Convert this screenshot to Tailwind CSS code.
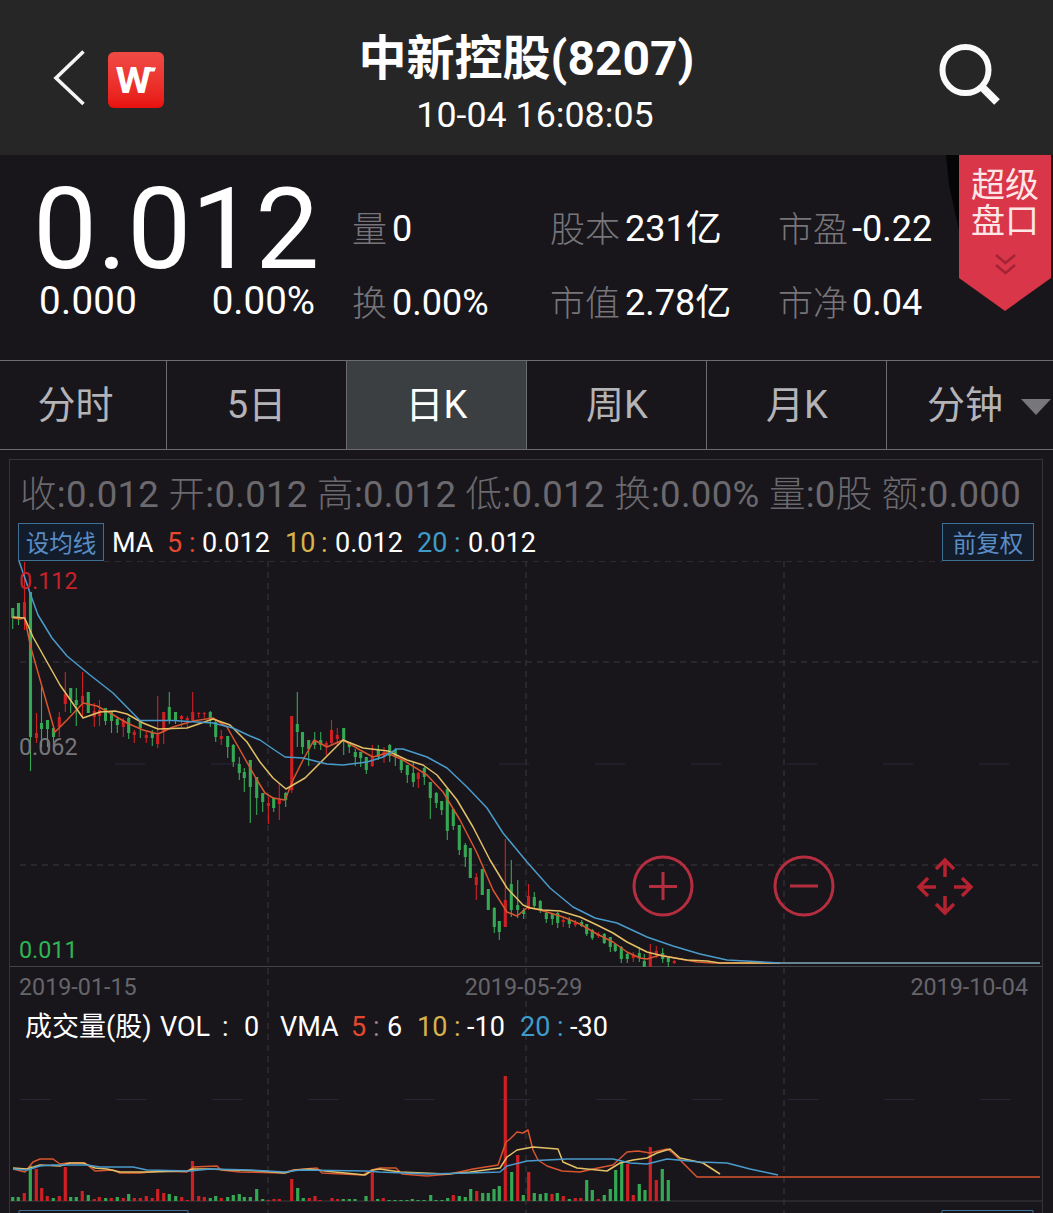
<!DOCTYPE html>
<html lang="zh-CN">
  <head>
    <meta charset="UTF-8" />
    <meta name="viewport" content="width=device-width, initial-scale=1.0" />
    <title>中新控股(8207)</title>
    <script src="https://cdn.jsdelivr.net/npm/@tailwindcss/browser@4"></script>
  </head>
  <body
    class="flex h-[1213px] w-[1053px] flex-col overflow-hidden bg-[#18161b] font-['Roboto','Noto_Sans_CJK_SC',sans-serif] text-white"
  >
    <!-- HEADER -->
    <header class="flex h-[155px] shrink-0 justify-between bg-[#262626]">
      <div class="flex w-[300px] items-start gap-[22px] pt-[49px] pl-[52px]">
        <svg class="h-[58px] w-[34px]" viewBox="0 0 34 58" fill="none" stroke="#f4f4f4" stroke-width="3.6">
          <path d="M31.500 2.500 L4 29 L31.500 55" />
        </svg>
        <div
          class="mt-[3px] flex h-14 w-14 items-center justify-center rounded-[6px] bg-linear-to-b from-[#f04a45] to-[#e8100f]"
        >
          <svg class="h-14 w-14" viewBox="0 0 56 56">
            <text x="7.500" y="41" font-size="36" font-weight="700" textLength="36" lengthAdjust="spacingAndGlyphs" fill="#fff">W</text>
            <path d="M39 15.500 H48 L46.500 19.500 H38 Z" fill="#fff" />
          </svg>
        </div>
      </div>
      <div class="pt-[30px] text-center">
        <h1 class="text-[48px] leading-[58px] font-bold">中新控股(8207)</h1>
        <p class="pl-[17px] text-[35.8px] leading-[54px]">10-04 16:08:05</p>
      </div>
      <div class="flex w-[300px] justify-end pt-[42px] pr-[51px]">
        <svg class="h-[66px] w-[66px]" viewBox="0 0 66 66" fill="none" stroke="#fafafa">
          <circle cx="29.500" cy="28" r="23" stroke-width="6" />
          <path d="M45 44 L61 60" stroke-width="8" />
        </svg>
      </div>
    </header>

    <!-- QUOTE -->
    <section class="flex h-[205px] shrink-0">
      <div class="w-[352px] pt-[22px] pl-[33px]">
        <p class="h-[104px] text-[114px] leading-[104px]">0.012</p>
        <div class="flex justify-between pr-[37px] pl-[6px] text-[38.5px] leading-[40px]">
          <span class="tracking-[0.300px]">0.000</span>
          <span>0.00%</span>
        </div>
      </div>
      <div
        class="grid w-[594px] grid-cols-[198px_228px_1fr] content-start pt-[38px] text-[36px] leading-[73px] whitespace-nowrap"
      >
        <p class="flex gap-[5px]"><span class="mt-px text-[35px] font-light text-[#77757a]">量</span>0</p>
        <p class="flex gap-[5px]"><span class="mt-px text-[35px] font-light text-[#77757a]">股本</span>231亿</p>
        <p class="flex gap-[4px]"><span class="mt-px text-[35px] font-light text-[#77757a]">市盈</span>-0.22</p>
        <p class="flex gap-[5px]"><span class="mt-px text-[35px] font-light text-[#77757a]">换</span>0.00%</p>
        <p class="flex gap-[5px]"><span class="mt-px text-[35px] font-light text-[#77757a]">市值</span>2.78亿</p>
        <p class="flex gap-[4px]"><span class="mt-px text-[35px] font-light text-[#77757a]">市净</span>0.04</p>
      </div>
      <div class="relative w-[107px]">
        <svg class="absolute inset-0 h-[160px] w-[107px]" viewBox="0 0 107 160">
          <path d="M0 0 H14 V80 L3 30 Z" fill="#050505" />
          <path d="M13 0 H105 V123 L59 156 L13 123 Z" fill="#d93649" />
          <g fill="none" stroke="#a52336" stroke-width="2.500">
            <path d="M50 100 L59.500 108 L69 100" />
            <path d="M50 110 L59.500 118 L69 110" />
          </g>
        </svg>
        <p class="relative pt-[12px] pl-[25px] text-[34px] leading-[36px] text-[#ffe6e6]">超级<br />盘口</p>
      </div>
    </section>

    <!-- PERIOD TABS -->
    <nav
      class="flex h-[90px] shrink-0 border-y border-[#6c6b70] text-center text-[38px] leading-[88px] text-[#b4b3b8]"
    >
      <div class="w-[167px] border-r border-[#6c6b70] pr-[15px]">分时</div>
      <div class="w-[180px] border-r border-[#6c6b70]">5日</div>
      <div class="w-[180px] border-r border-[#6c6b70] bg-[#3c3f42] text-white">日K</div>
      <div class="w-[180px] border-r border-[#6c6b70] pl-px">周K</div>
      <div class="w-[180px] border-r border-[#6c6b70] pl-px">月K</div>
      <div class="flex grow items-center gap-[18px] pl-[40px]">
        <span>分钟</span>
        <svg class="mt-1 h-4 w-[30px] shrink-0" viewBox="0 0 30 16"><path d="M0 0 H30 L15 16 Z" fill="#77767b" /></svg>
      </div>
    </nav>

    <!-- CHART PANEL -->
    <main class="mt-[9px] mr-[10px] ml-[9px] flex grow flex-col border border-b-0 border-[#36343a]">
      <div
        class="flex h-[63px] justify-between pr-[21px] pl-[10px] text-[36.5px] leading-[70px] tracking-[0.300px] whitespace-nowrap text-[#6b696e]"
      >
        <span><span class="font-light">收</span>:0.012</span>
        <span><span class="font-light">开</span>:0.012</span>
        <span><span class="font-light">高</span>:0.012</span>
        <span><span class="font-light">低</span>:0.012</span>
        <span><span class="font-light">换</span>:0.00%</span>
        <span><span class="font-light">量</span>:0<span class="font-light">股</span></span>
        <span><span class="font-light">额</span>:0.000</span>
      </div>
      <div class="flex h-[38px] shrink-0 pr-[8px] pl-[8px] text-[27px] leading-[40px]">
        <span class="h-[38px] w-[86px] border border-[#3f6f93] bg-[#121c2a] text-center text-[23.5px] leading-[40px] text-[#5a8cc6]">设均线</span>
        <span class="ml-[8px] w-[55px]">MA</span>
        <span class="w-[22px] text-[#e6482f]">5</span>
        <span class="w-[13px] text-[#e6482f]">:</span>
        <span class="w-[83px]">0.012</span>
        <span class="w-[36px] text-[#d9b24c]">10</span>
        <span class="w-[14px] text-[#d9b24c]">:</span>
        <span class="w-[82px]">0.012</span>
        <span class="w-[37px] text-[#3d9cc9]">20</span>
        <span class="w-[14px] text-[#3d9cc9]">:</span>
        <span>0.012</span>
        <span class="ml-auto h-[38px] w-[92px] border border-[#3f6f93] bg-[#121c2a] text-center text-[23.5px] leading-[40px] text-[#5a8cc6]">前复权</span>
      </div>

      <div class="relative grow">
        <!-- drawn in page coordinates -->
        <svg id="chart" class="absolute inset-0 h-full w-full" viewBox="10 561 1032 652" preserveAspectRatio="xMinYMin slice" fill="none">
          <g stroke="#3a393e" stroke-dasharray="6 5">
            <path d="M268 561 V1213 M526 561 V1213 M784 561 V1213" />
            <path d="M20 662 H1042 M20 865 H1042" />
            <path d="M104 561.500 H942" stroke="#2c2b30" />
          </g>
          <path d="M115 764 H1042 M20 1099.500 H1042" stroke="#27263a" stroke-dasharray="30 66" />
          <path d="M10 966.500 H1042" stroke="#434247" />
          <path d="M10 1201 H1042" stroke="#3a393e" />
          <g id="bars"></g>
          <g id="lines" stroke-width="1.500" stroke-linejoin="round"></g>
          <path d="M780 963 H1040" stroke="#7fa9bd" stroke-width="1.500" />
          <path d="M19 1213 V1210.500 H188 V1213 M942 1213 V1210.500 H1033 V1213" stroke="#3f6f93" />
          <!-- zoom and pan controls -->
          <g stroke="#b52e40" stroke-width="3">
            <circle cx="663" cy="886" r="29" />
            <path d="M649 886.500 H677 M663 872 V900" />
            <circle cx="804" cy="886" r="29" />
            <path d="M790 886 H818" />
          </g>
          <g stroke="#b52230" stroke-width="3.500">
            <path d="M945 877 V861 M936 869 L945 860 L954 869" />
            <path d="M945 896 V912 M936 904 L945 913 L954 904" />
            <path d="M936 887 H920 M928 878 L919 887 L928 896" />
            <path d="M954 887 H970 M962 878 L971 887 L962 896" />
          </g>
        </svg>
        <div class="relative flex h-full flex-col text-[23.3px] leading-[28px] text-[#77767a]">
          <p class="mt-[6px] pl-[9px] text-[#c5222b]">0.112</p>
          <p class="mt-[138px] pl-[9px]">0.062</p>
          <p class="mt-[175px] pl-[9px] text-[#2fb552]">0.011</p>
          <div class="mt-[9px] flex justify-between pr-[14px] pl-[9px] text-[#66656a]">
            <span>2019-01-15</span>
            <span>2019-05-29</span>
            <span>2019-10-04</span>
          </div>
          <div class="mt-[7px] flex pl-[15px] text-[27px] leading-[38px] whitespace-nowrap text-white">
            <span class="w-[135px] text-[27px]">成交量(股)</span>
            <span class="w-[62px]">VOL</span>
            <span class="w-[22px]">:</span>
            <span class="w-[36px]">0</span>
            <span class="w-[71px]">VMA</span>
            <span class="w-[22px] text-[#e6482f]">5</span>
            <span class="w-[14px] text-[#a08078]">:</span>
            <span class="w-[30px]">6</span>
            <span class="w-[37px] text-[#d9b24c]">10</span>
            <span class="w-[13px] text-[#d9b24c]">:</span>
            <span class="w-[53px]">-10</span>
            <span class="w-[37px] text-[#3d9cc9]">20</span>
            <span class="w-[13px] text-[#3d9cc9]">:</span>
            <span>-30</span>
          </div>
        </div>
      </div>
    </main>

    <script>
      const GREEN = "#35a853";
      const RED = "#cf1f22";

      // x, high, low, body top, body bottom, color
      const candles = `12.7 608 629 608 618 g|18.5 603 625 603 618 g|24.5 562 630 602 618 r|30.5 592 771 592 737 g|36.5 713 743 733 738 r|41.5 687 747 723 729 g|47.5 720 747 720 729 g|53.5 728 745 728 737 g|59.3 712 737 717 727 r|65.3 672 712 694 704 r|70.7 688 713 688 700 g|76.3 688 726 700 705 g|82.5 672 717 696 703 r|88.3 692 713 692 713 g|94.3 703 727 711 717 r|99.5 700 726 710 716 r|105.5 708 725 708 721 g|111.5 712 733 712 721 g|117.3 717 733 719 725 g|123.3 718 737 720 727 r|128.7 717 739 718 733 g|134.3 730 743 732 735 r|140.3 722 738 722 728 g|146.3 732 743 735 738 r|152.3 730 746 732 738 g|157.7 696 748 735 744 r|163.7 712 744 712 732 r|169.3 692 724 707 720 g|175.5 712 724 712 720 g|181.5 715 727 716 719 r|187.3 716 727 718 720 r|192.7 692 722 712 720 r|198.7 712 718 713 714 r|204.3 712 718 713 714 r|210.3 711 727 712 718 g|215.7 720 742 722 737 g|221.3 730 745 736 739 r|227.7 736 758 736 747 g|233.3 744 767 745 762 g|239.3 757 780 764 773 g|244.3 768 792 772 778 g|250.3 760 823 760 787 g|256.7 777 815 777 798 g|262.7 793 812 793 802 g|268.4 797 824 803 806 r|273.7 797 812 798 808 g|279.3 783 820 800 804 r|285.7 792 807 793 800 g|291.7 716 793 716 790 r|297.3 692 747 724 732 g|302.5 732 754 732 747 g|308.7 740 766 740 749 g|314.7 732 749 741 745 g|320.7 732 750 740 745 g|326.3 741 755 743 747 r|331.5 720 745 730 743 r|337.3 728 745 735 739 r|343.7 728 755 728 742 g|349.3 742 753 742 747 g|355.3 749 766 752 757 g|360.7 752 767 752 758 g|366.3 757 774 757 770 g|372.3 745 767 757 766 r|378.3 745 760 750 757 g|384 747 763 752 757 r|389.7 744 762 745 756 g|395.3 748 766 750 757 g|401.3 760 773 760 770 g|407.3 765 783 765 775 g|413.3 762 787 773 782 g|418.3 772 788 773 779 r|424.3 767 785 768 777 g|430.3 782 819 782 798 g|436.3 792 808 793 803 g|441.7 801 815 801 810 g|447.3 789 840 789 831 g|453.3 809 830 809 826 g|459.3 825 855 825 850 g|465.3 843 867 845 857 g|470.3 848 878 848 878 g|476.3 873 900 877 885 r|482.3 869 895 869 895 g|488.3 889 910 889 910 g|494.3 907 933 908 927 g|499.3 921 940 921 932 g|505.3 839 927 900 927 r|511.3 860 917 884 910 g|517.7 880 918 905 910 g|523.7 908 919 910 914 g|528.5 884 910 896 907 r|534.3 892 908 897 906 g|540.3 900 913 901 910 g|546.3 912 923 913 919 g|552.3 913 925 914 919 g|557.7 912 928 913 923 g|563.3 918 927 920 922 r|569.3 917 928 920 924 g|575.3 920 927 923 925 r|581.7 920 927 922 926 g|586.7 924 936 924 934 g|592.3 929 940 930 938 g|598.3 932 938 934 936 r|604.3 933 944 934 943 g|610.3 937 952 937 947 g|615.3 943 952 944 951 g|621.3 946 963 947 959 g|627.3 953 963 954 959 g|633.3 952 962 955 958 r|639.3 947 962 953 958 g|644.3 954 967 961 967 g|650.3 944 967 953 967 r|656.3 946 958 951 954 r|662.7 948 963 953 959 g|668.3 957 967 958 962 g|674.3 960 964 961 963 r`;

      // x, height, color
      const volumes = `12.7 4 g|18.3 4 g|24.3 8 r|30.3 35 g|36.3 32 r|41.7 13 r|47.3 5 r|53.3 3 g|59.3 5 r|65.3 34 r|70.7 4 g|76.3 4 g|82.3 10 r|88.3 6 g|94.3 2 r|99.3 4 r|105.7 3 g|111.3 3 r|117.3 4 g|123.3 3 r|128.7 7 g|134.3 3 r|140.3 3 r|146.3 5 r|152.3 3 r|157.7 12 r|163.7 8 r|169.3 7 g|175.7 5 g|181.7 4 r|187.3 1 r|192.5 40 r|198.7 5 r|204.3 4 r|210.3 3 g|215.7 5 g|221.3 3 r|227.7 4 g|233.3 6 g|239.3 7 g|244.3 4 g|250.3 4 g|256.7 12 g|262.7 2 g|268.3 1 r|274 2 r|279.3 2 r|291.7 22 r|297.7 13 g|303.3 3 g|309.3 3 r|315 5 r|320 1 r|332 3 r|337.7 2 r|343.3 2 g|349.3 2 g|355 2 g|366 5 g|372.3 32 r|377.7 2 g|383.3 3 r|389 1 g|395 1 g|401 1 g|407 1 g|412.3 2 g|418 1 g|424 1 g|430.7 6 g|436 1 g|442 1 g|447.7 3 g|453.3 6 r|459.3 5 g|465.3 4 g|470.7 12 g|476.7 10 r|482.7 8 g|488.3 8 g|494 12 g|499.3 15 g|505.3 125 r|511.7 29 g|517.7 46 r|523.3 6 g|528.7 29 r|534.3 8 g|540.3 7 g|546 8 g|552 7 r|557.3 8 g|563.3 5 r|569.3 2 g|575.3 3 r|580.7 3 r|586.7 21 g|592.3 11 g|598.3 2 r|604.3 6 g|610.3 12 g|615.7 31 g|621.7 38 g|627.7 37 r|633.3 6 r|639.3 17 g|645 11 g|650.3 54 r|656.3 21 r|662.3 32 g|668.3 21 g`;

      const lines = {
        "#d9552f": [
          "12.7,618 20,619 24.7,618 30.7,647 43,690 55,732 67,720 83,703 97,706 110,713 127,723 143,730 158,734 173,727 193,721 213,718 227,727 240,750 257,780 265,793 273,798 285,800 293,780 303,760 314,740 327,747 343,740 360,750 373,757 387,753 403,760 427,775 443,792 460,820 477,853 493,890 507,912 517,916 528,907 547,912 563,917 580,924 597,934 613,942 627,952 640,958 647,959 660,955 680,959 697,962 713,963 780,963",
          "13,1169 25,1172 33,1162 40,1159 53,1159 60,1164 67,1163 85,1163 95,1171 113,1170 120,1173 140,1173 160,1171 187,1172 193,1167 217,1166 221,1170 240,1172 283,1173 293,1170 317,1168 322,1173 363,1175 372,1170 380,1168 396,1168 402,1174 427,1176 450,1174 473,1169 498,1165 506,1142 510,1139 517,1132 523,1133 528,1130 533,1150 538,1160 547,1166 562,1171 580,1172 593,1169 613,1165 627,1152 638,1151 650,1153 667,1149 673,1153 697,1177 1040,1177",
        ],
        "#e3bf66": [
          "12.7,617 24.7,618 33,637 42,653 60,685 83,718 100,712 115,711 127,714 143,723 158,729 187,728 213,719 230,725 247,742 260,762 273,778 286,789 305,778 323,760 343,740 363,748 388,751 407,760 423,765 437,775 457,800 473,827 490,860 507,888 523,905 530,908 543,910 560,911 580,917 597,925 613,933 627,942 647,952 663,956 687,960 707,961 720,963 780,963",
          "13,1168 27,1169 40,1165 60,1166 70,1163 83,1163 95,1168 107,1169 120,1172 150,1172 187,1171 193,1169 210,1169 230,1170 260,1171 285,1173 295,1170 310,1169 325,1171 365,1175 373,1170 380,1169 400,1172 423,1173 447,1174 470,1172 500,1168 507,1157 517,1150 533,1147 558,1149 563,1162 577,1168 607,1171 620,1163 633,1160 647,1158 657,1153 670,1149 680,1158 703,1163 720,1174",
        ],
        "#4a9bcb": [
          "19,561 30,593 38,615 52,638 67,656 90,675 113,693 140,720.5 173,720.5 213,723 233,728 250,736 260,740 273,749 285,757 303,758 327,764 343,765 367,762 383,757 397,749 403,749 427,757 447,768 467,787 487,808 503,833 527,862 550,888 573,907 595,918 617,923 647,937 673,946 700,954 727,960 780,963",
          "13,1169 27,1170 40,1166 53,1165 87,1165 100,1167 133,1167 147,1170 190,1171 210,1169 250,1170 285,1172 300,1170 365,1171 380,1172 427,1174 470,1173 500,1172 507,1166 527,1161 567,1159 613,1159 630,1163 647,1164 667,1159 700,1162 727,1163 750,1169 778,1175",
        ],
      };

      function rect(x, y, w, h, c) {
        return `<rect x="${x - w / 2}" y="${y}" width="${w}" height="${h}" fill="${c === "g" ? GREEN : RED}"/>`;
      }

      let bars = "";
      candles.split("|").forEach((row) => {
        const [x, hi, lo, top, bottom, c] = row.split(" ");
        bars += rect(+x, +hi, 1.1, lo - hi, c) + rect(+x, +top, 3.1, bottom - top, c);
      });
      volumes.split("|").forEach((row) => {
        const [x, h, c] = row.split(" ");
        bars += rect(+x, 1201 - h, 3.2, +h, c);
      });
      document.getElementById("bars").innerHTML = bars;

      document.getElementById("lines").innerHTML = Object.entries(lines)
        .map(([color, list]) => list.map((p) => `<polyline points="${p}" stroke="${color}"/>`).join(""))
        .join("");
    </script>
  </body>
</html>
